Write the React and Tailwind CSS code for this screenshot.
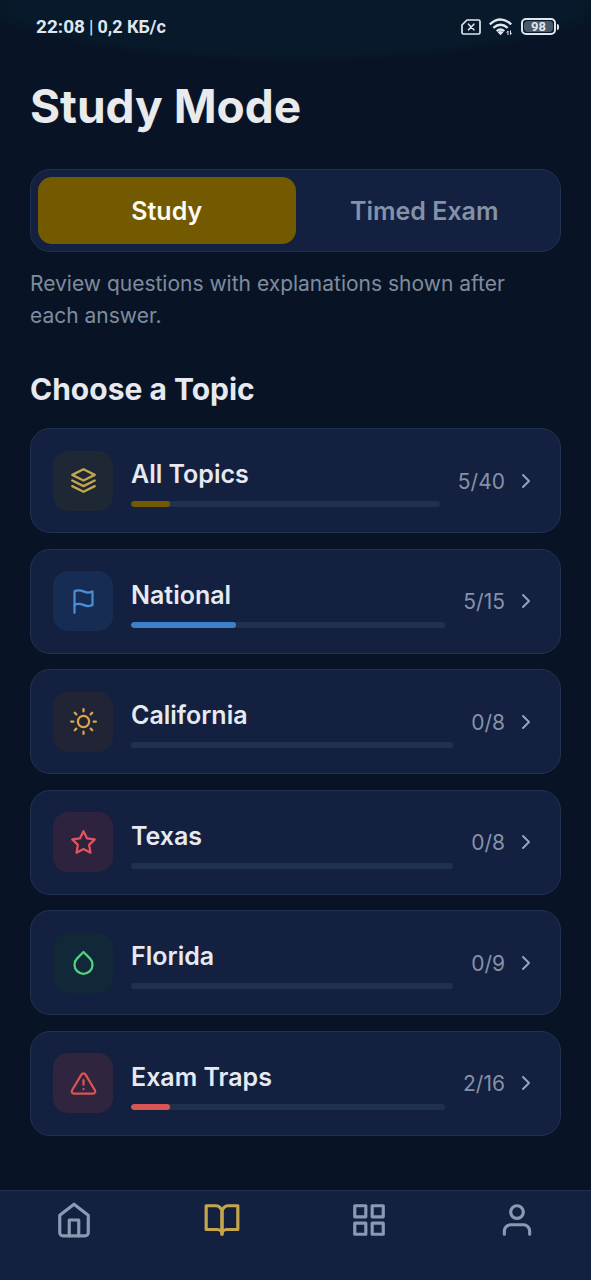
import {
  FiAlertTriangle,
  FiBookOpen,
  FiChevronRight,
  FiDroplet,
  FiFlag,
  FiGrid,
  FiHome,
  FiLayers,
  FiStar,
  FiSun,
  FiUser,
} from "react-icons/fi";

const topics = [
  { name: "All Topics", done: 5, total: 40, Icon: FiLayers, tile: "bg-[#1e2834] text-[#c5a64c]", bar: "bg-[#735a00]" },
  { name: "National", done: 5, total: 15, Icon: FiFlag, tile: "bg-[#172c52] text-[#4a8fd6]", bar: "bg-[#3d80c9]" },
  { name: "California", done: 0, total: 8, Icon: FiSun, tile: "bg-[#212435] text-[#dfa440]", bar: "bg-[#dfa440]" },
  { name: "Texas", done: 0, total: 8, Icon: FiStar, tile: "bg-[#2e233e] text-[#e0555f]", bar: "bg-[#e0555f]" },
  { name: "Florida", done: 0, total: 9, Icon: FiDroplet, tile: "bg-[#102838] text-[#55cf84]", bar: "bg-[#55cf84]" },
  { name: "Exam Traps", done: 2, total: 16, Icon: FiAlertTriangle, tile: "bg-[#2f253e] text-[#d95555]", bar: "bg-[#d95555]" },
];

const tabs = [
  { label: "Home", Icon: FiHome },
  { label: "Study", Icon: FiBookOpen, active: true },
  { label: "Categories", Icon: FiGrid },
  { label: "Profile", Icon: FiUser },
];

function StatusBar() {
  return (
    <div className="flex h-[53px] items-center justify-between pr-8 pl-9 font-[Roboto,sans-serif] text-[#dfe6ee]">
      <p className="flex items-center gap-1 text-[19px] leading-6 font-bold">
        <span>22:08</span>
        <span className="text-lg font-normal">|</span>
        <span className="text-lg">0,2 КБ/с</span>
      </p>
      <div className="flex items-center gap-2">
        <svg className="h-4 w-5" viewBox="0 0 20 16" fill="none" stroke="currentColor" strokeWidth="2" strokeLinejoin="round" strokeLinecap="round">
          <path d="M6 1H17.500Q19 1 19 2.500V13.500Q19 15 17.500 15H2.500Q1 15 1 13.500V6Z" strokeWidth="1.700" />
          <path d="M7.500 5.200L12.900 10.800M12.900 5.200L7.500 10.800" strokeWidth="1.600" />
        </svg>
        <svg className="h-[18px] w-6" viewBox="0 0 24 18" fill="none" stroke="currentColor" strokeWidth="2.400">
          <path d="M.8 6.300Q11.500-3.300 22.200 6.300M4.300 9.800Q11.500 3.500 18.700 9.800M7.700 13.200Q11.500 10 15.300 13.200" />
          <path d="M8.600 14.200Q11.500 12 14.400 14.200L11.500 17.300Z" fill="currentColor" stroke="none" />
          <path d="M19 17V13L17.800 14.800M21.500 12.500V16.500L22.700 14.800" strokeWidth="1" />
        </svg>
        <div className="flex items-center gap-px">
          <div className="flex h-[17px] w-[35px] rounded-[5px] border-2 border-current p-px">
            <span className="flex flex-1 items-center justify-center rounded-sm bg-[#4a5967] text-[13px] leading-none font-bold">98</span>
          </div>
          <div className="h-1.5 w-0.5 rounded-r bg-current" />
        </div>
      </div>
    </div>
  );
}

function TopicCard({ name, done, total, Icon, tile, bar }) {
  return (
    <li>
      <button type="button" className="flex h-[105px] w-full items-center rounded-[20px] border border-[#21324f] bg-[#13203f] px-[22px] text-left">
        <span className={`flex size-[60px] shrink-0 items-center justify-center rounded-[15px] ${tile}`}>
          <Icon size={27} aria-hidden="true" />
        </span>
        <span className="ml-[18px] flex flex-1 flex-col gap-[11px] pt-1">
          <span className="text-[25px] leading-8 font-semibold text-[#e6e9f0]">{name}</span>
          <span className="block h-1.5 overflow-hidden rounded-full bg-[#20314e]">
            <span className={`block h-full rounded-full ${bar}`} style={{ width: `${(done / total) * 100}%` }} />
          </span>
        </span>
        <span className="ml-[18px] pt-0.5 text-[21px] leading-7 text-[#8492a8]">
          {done}/{total}
        </span>
        <FiChevronRight className="ml-[9px] size-6 text-[#94a3bb]" aria-hidden="true" />
      </button>
    </li>
  );
}

export default function App() {
  return (
    <div className="flex min-h-screen flex-col bg-[#081426] bg-[radial-gradient(ellipse_54%_61px_at_50%_0%,#07192a_90%,transparent_100%)] font-[Inter,sans-serif]">
      <StatusBar />
      <main className="flex flex-1 flex-col px-[30px] pb-[54px]">
        <h1 className="mt-[23px] text-[46px] leading-[60px] font-bold text-[#e9eaec]">Study Mode</h1>

        <div className="mt-[33px] grid grid-cols-2 rounded-[20px] border border-[#21324f] bg-[#13203f] p-[7px]">
          <button type="button" aria-pressed="true" className="h-[67px] rounded-[14px] bg-[#735a00] pt-0.5 text-[25px] font-semibold text-[#fbfaf3]">
            Study
          </button>
          <button type="button" aria-pressed="false" className="h-[67px] rounded-[14px] pt-0.5 text-[25px] font-semibold text-[#8492a8]">
            Timed Exam
          </button>
        </div>

        <p className="mt-4 pr-6 text-[21px] leading-8 text-[#7e8c9e]">
          Review questions with explanations shown after each answer.
        </p>

        <h2 className="mt-[39px] text-[30px] leading-9 font-bold text-[#e6e9f0]">Choose a Topic</h2>

        <ul className="mt-[21px] grid flex-1 content-between gap-3.5">
          {topics.map((topic) => (
            <TopicCard key={topic.name} {...topic} />
          ))}
        </ul>
      </main>

      <nav aria-label="Main" className="grid h-[90px] grid-cols-4 items-start border-t border-[#21324f] bg-[#13203f] pt-2.5">
        {tabs.map(({ label, Icon, active }) => (
          <a key={label} href={`#${label.toLowerCase()}`} aria-label={label} aria-current={active ? "page" : undefined} className={`flex justify-center ${active ? "text-[#c5a64c]" : "text-[#8b9ab3]"}`}>
            <Icon size={38} aria-hidden="true" />
          </a>
        ))}
      </nav>
    </div>
  );
}
